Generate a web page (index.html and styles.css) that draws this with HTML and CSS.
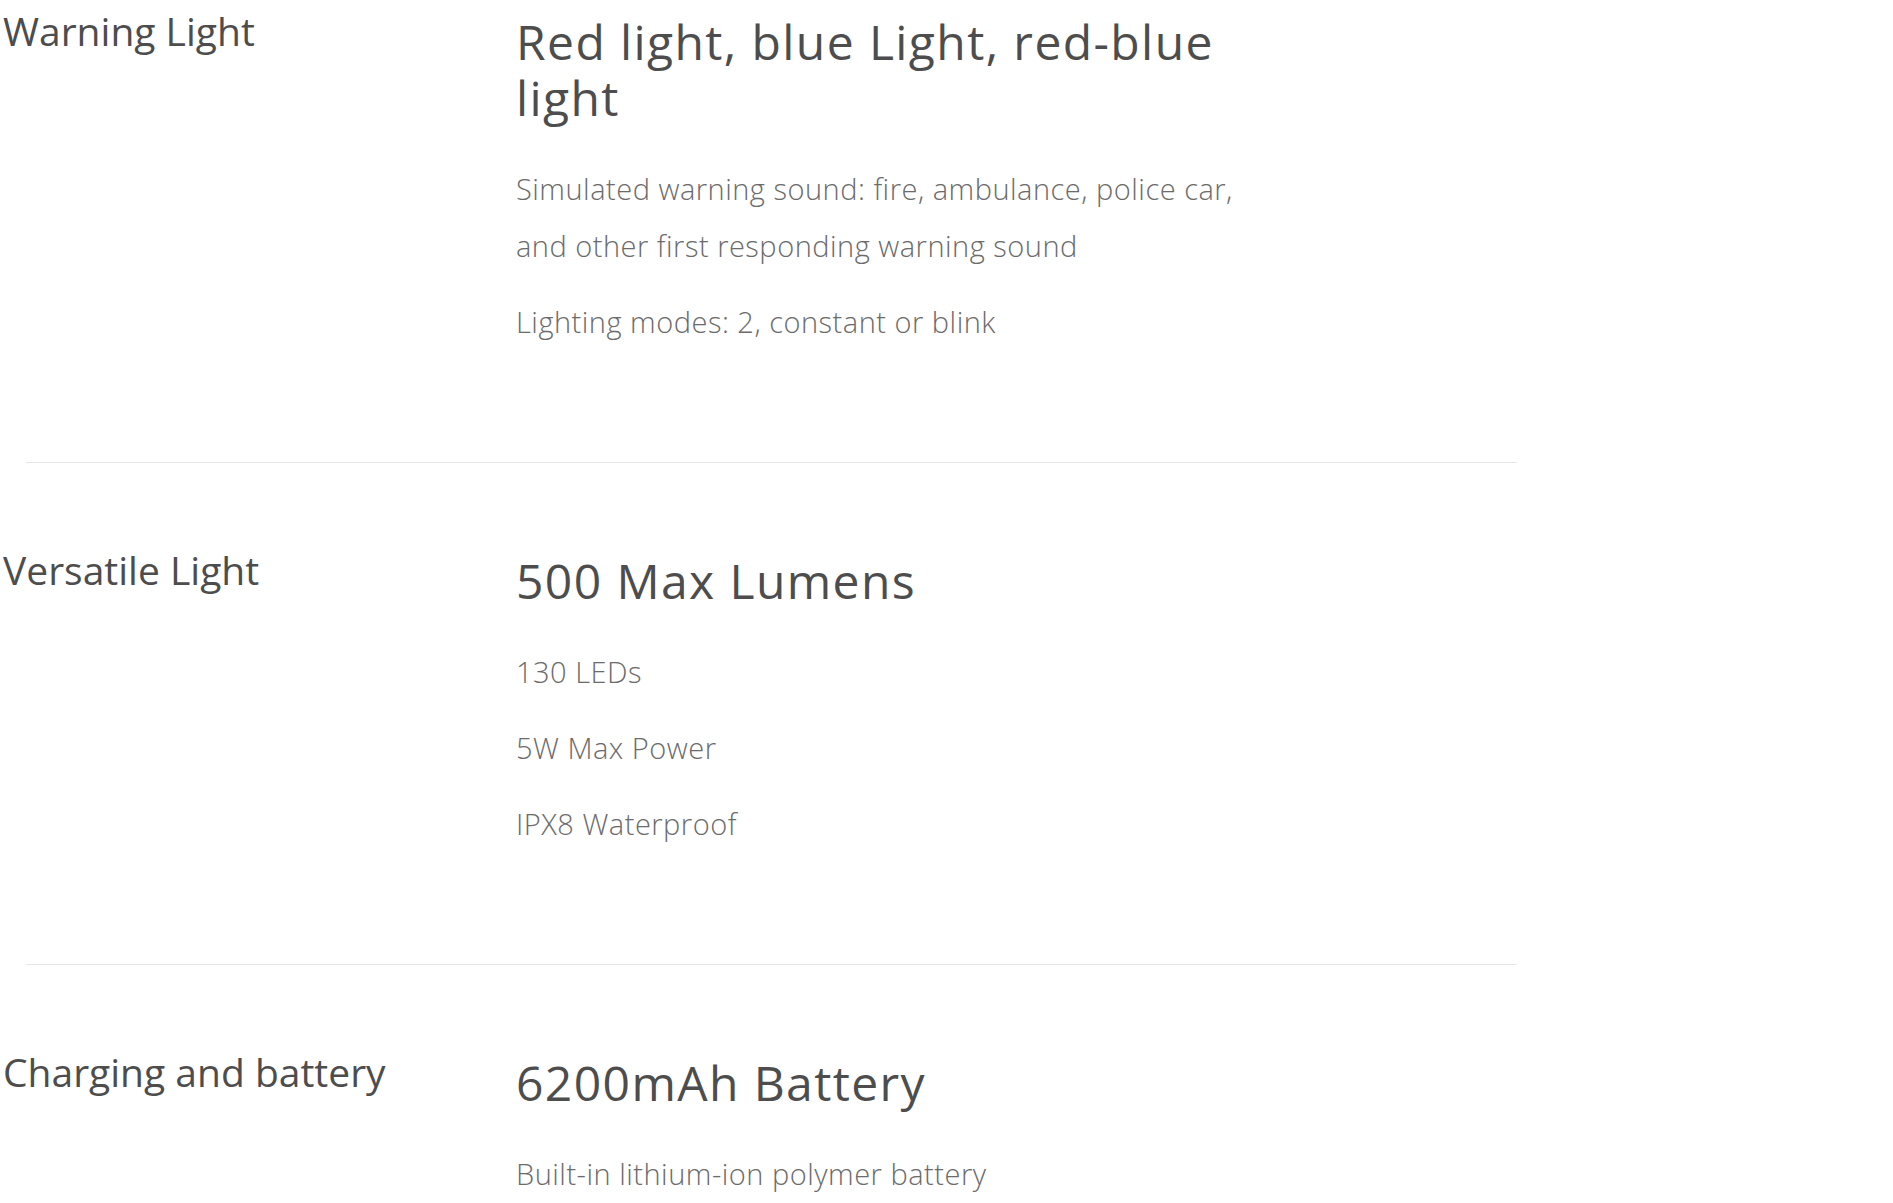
FILE: index.html
```html
<!DOCTYPE html>
<html lang="en">
<head>
<meta charset="utf-8">
<title>Specifications</title>
<link rel="stylesheet" href="styles.css">
</head>
<body>
<div class="specs">
  <section class="spec">
    <h3 class="spec-label">Warning Light</h3>
    <div class="spec-body">
      <h2 class="spec-title">Red light, blue Light, red-blue light</h2>
      <p class="spec-text">Simulated warning sound: fire, ambulance, police car, and other first responding warning sound</p>
      <p class="spec-text">Lighting modes: 2, constant or blink</p>
    </div>
  </section>
  <hr class="divider">
  <section class="spec">
    <h3 class="spec-label">Versatile Light</h3>
    <div class="spec-body">
      <h2 class="spec-title">500 Max Lumens</h2>
      <p class="spec-text">130 LEDs</p>
      <p class="spec-text">5W Max Power</p>
      <p class="spec-text">IPX8 Waterproof</p>
    </div>
  </section>
  <hr class="divider">
  <section class="spec">
    <h3 class="spec-label">Charging and battery</h3>
    <div class="spec-body spec-body-last">
      <h2 class="spec-title">6200mAh Battery</h2>
      <p class="spec-text">Built-in lithium-ion polymer battery</p>
    </div>
  </section>
</div>
</body>
</html>
```
FILE: styles.css
```css
html, body {
  margin: 0;
  padding: 0;
  background: #ffffff;
}

body {
  font-family: "Open Sans", "Noto Sans", "Liberation Sans", sans-serif;
  color: #4d4d4d;
  overflow: hidden;
}

.specs {
  padding-left: 3px;
}

.spec {
  display: grid;
  grid-template-columns: 513px 740px;
  align-items: start;
}

.spec-label {
  margin: 0;
  font-size: 39px;
  font-weight: 400;
  line-height: 62px;
  color: #4d4d4d;
}

.spec-body {
  padding-bottom: 112px;
}

.spec-body-last {
  padding-bottom: 0;
}

.spec-title {
  margin: 0;
  padding-top: 14px;
  font-size: 48px;
  font-weight: 400;
  line-height: 56px;
  letter-spacing: 1.4px;
  color: #4d4d4d;
}

.spec-text {
  margin: 0;
  font-size: 29px;
  font-weight: 300;
  line-height: 57px;
  letter-spacing: 0.5px;
  color: #6b6b6b;
}

.spec-title + .spec-text {
  margin-top: 34px;
}

.spec-text + .spec-text {
  margin-top: 19px;
}

.divider {
  margin: 0 0 76px 23px;
  width: 1491px;
  height: 0;
  border: 0;
  border-top: 1px solid #e6e6e6;
}
```
